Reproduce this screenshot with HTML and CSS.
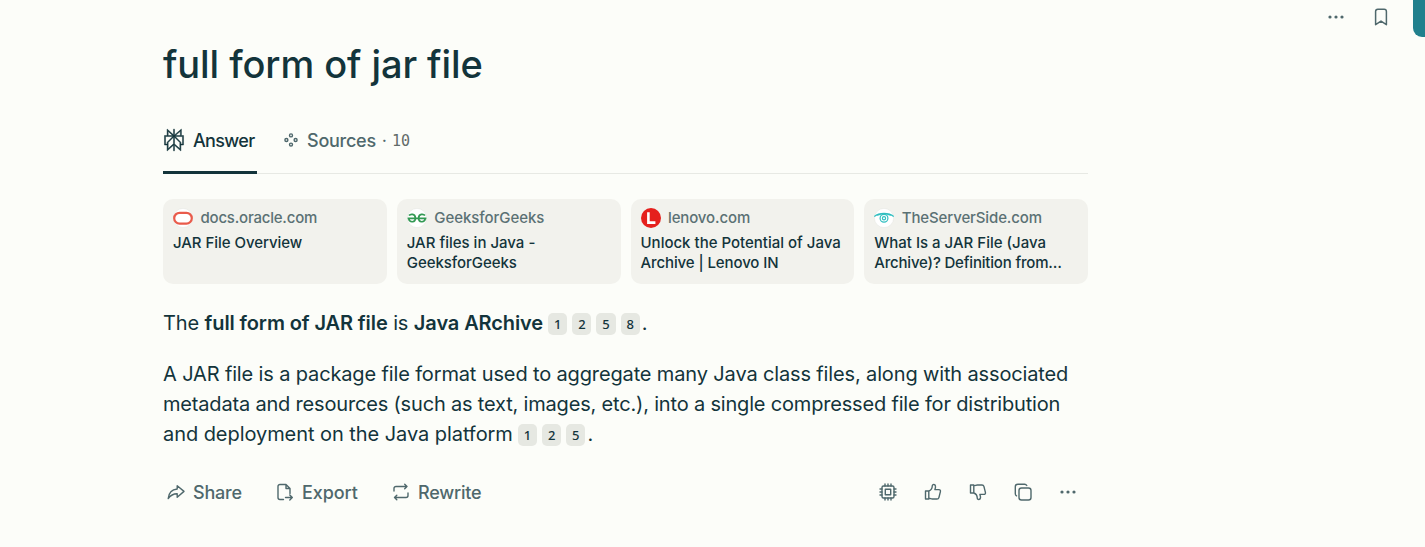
FILE: index.html
```html
<!DOCTYPE html>
<html lang="en">
<head>
<meta charset="utf-8">
<title>full form of jar file</title>
<link rel="stylesheet" href="styles.css">
</head>
<body>
<div class="toolbar">
  <svg class="icon" width="20" height="20" viewBox="0 0 20 20"><g fill="currentColor"><circle cx="4" cy="10" r="1.6"/><circle cx="10" cy="10" r="1.6"/><circle cx="16" cy="10" r="1.6"/></g></svg>
  <svg class="icon bookmark" width="20" height="20" viewBox="0 0 20 20"><path d="M4.600 17.700V4.500a2.200 2.200 0 0 1 2.200-2.200h6.400a2.200 2.200 0 0 1 2.200 2.200v13.200L10 14.100z"/></svg>
  <div class="share-button"></div>
</div>
<main class="thread">
  <h1 class="title"><span class="title-text">full form of jar file</span></h1>
  <nav class="tabs">
    <div class="tab active">
      <svg class="logo" width="22" height="22" viewBox="0 0 24 24"><path d="M22.3977 7.0896h-2.3106V.0676l-7.5094 6.3542V.1577h-1.1554v6.1966L4.4904 0v7.0896H1.6023v10.3976h2.8882V24l6.932-6.3591v6.2005h1.1554v-6.0469l6.9318 6.1807v-6.4879h2.8882V7.0896zm-3.4657-4.531v4.531h-5.355l5.355-4.531zm-13.2862.0676 4.8691 4.4634H5.6458V2.6262zM2.7576 16.332V8.245h7.8476l-6.1149 6.1147v1.9723H2.7576zm2.8882 5.0404v-6.534l5.7764-5.7764v7.0111l-5.7764 5.2993zm12.7086.0248-5.7766-5.1509V9.0618l5.7766 5.7766v6.5588zm2.8882-5.0652h-1.733v-1.9723L13.3948 8.245h7.8478v8.087z"/></svg>
      <span class="tab-answer">Answer</span>
    </div>
    <div class="tab">
      <svg class="icon dots" width="16" height="16" viewBox="0 0 16 16"><circle cx="8" cy="3.400" r="1.500"/><circle cx="3.400" cy="8" r="1.500"/><circle cx="12.600" cy="8" r="1.500"/><circle cx="8" cy="12.600" r="1.500"/></svg>
      <span class="tab-sources">Sources</span><span class="separator">·</span><span class="count">10</span>
    </div>
  </nav>
  <section class="cards">
    <article class="card">
      <div class="site"><svg width="20" height="20" viewBox="0 0 20 20"><circle cx="10" cy="10" r="9.600" fill="#fff" stroke="#e5e6e3" stroke-width=".5"/><rect x="1.200" y="4.800" width="17.600" height="10.800" rx="5.400" fill="#fff" stroke="#e95b4b" stroke-width="2.200"/></svg><span class="domain oracle">docs.oracle.com</span></div>
      <div class="headline h-oracle">JAR File Overview</div>
    </article>
    <article class="card">
      <div class="site"><svg width="20" height="20" viewBox="0 0 20 20"><circle cx="10" cy="10" r="9.600" fill="#fff" stroke="#e5e6e3" stroke-width=".5"/><path d="M.6 10.300h18.800M2 7.600C3.500 5.600 8 5.600 8.400 9.800 8.600 14.800 2.500 15 1.700 10.700M18 7.600c-1.500-2-6-2-6.400 2.200-.2 5 5.900 5.200 6.700.9" fill="none" stroke="#349954" stroke-width="1.700"/></svg><span class="domain geeks">GeeksforGeeks</span></div>
      <div class="headline"><span class="g1">JAR files in Java -</span><br><span class="g2">GeeksforGeeks</span></div>
    </article>
    <article class="card">
      <div class="site"><svg width="20" height="20" viewBox="0 0 20 20"><circle cx="10" cy="10" r="10" fill="#e5201d"/><path d="M7.400 4.200v10.400h7" fill="none" stroke="#fff" stroke-width="2.600"/></svg><span class="domain lenovo">lenovo.com</span></div>
      <div class="headline"><span class="l1">Unlock the Potential of Java</span><br><span class="l2">Archive | Lenovo IN</span></div>
    </article>
    <article class="card">
      <div class="site"><svg width="20" height="20" viewBox="0 0 20 20"><circle cx="10" cy="10" r="9.600" fill="#fff" stroke="#e5e6e3" stroke-width=".5"/><g fill="none" stroke="#32bfc0"><path d="M.3 8.500C5 4.400 15 4.400 19.700 8.500M3.500 7.200Q10 4 16.500 7.200" stroke-width="1.200"/><circle cx="10" cy="10.300" r="3.900" stroke-width="1.200"/><circle cx="10" cy="10.300" r="1.600" stroke-width="1.200"/></g></svg><span class="domain server">TheServerSide.com</span></div>
      <div class="headline"><span class="s1">What Is a JAR File (Java</span><br><span class="s2">Archive)? Definition from…</span></div>
    </article>
  </section>
  <section class="answer">
    <p class="line lead"><span class="a1">The <b>full form of JAR file</b> is <b>Java ARchive</b></span><span class="cites"><span class="cite">1</span><span class="cite">2</span><span class="cite">5</span><span class="cite">8</span></span>.</p>
    <p class="line"><span class="a2">A JAR file is a package file format used to aggregate many Java class files, along with associated</span><br><span class="a3">metadata and resources (such as text, images, etc.), into a single compressed file for distribution</span><br><span class="a4">and deployment on the Java platform</span><span class="cites"><span class="cite">1</span><span class="cite">2</span><span class="cite">5</span></span>.</p>
  </section>
  <footer class="actions">
    <div class="action share"><svg class="icon" width="18" height="18" viewBox="0 0 18 18"><path d="M10.200 6V2.800L17 8.400l-6.800 5.800v-3.400c-3.800-.1-6.400 1.300-9 4.800.5-5.400 3.600-9.100 9-9.600z"/></svg><span>Share</span></div>
    <div class="action export"><svg class="icon" width="18" height="18" viewBox="0 0 18 18"><path d="M7.500 16.500H4a2 2 0 0 1-2-2v-11a2 2 0 0 1 2-2h6l4 4v5M10 1.800v3.700h3.800M9.500 14.500h6.800M13.800 12l2.500 2.500-2.500 2.500"/></svg><span>Export</span></div>
    <div class="action rewrite"><svg class="icon" width="18" height="18" viewBox="0 0 18 18"><path d="M2 8V5.500a2 2 0 0 1 2-2h11M12.700 1.200 15 3.500l-2.300 2.300M16 10v2.500a2 2 0 0 1-2 2H2.500M4.800 12.200l-2.300 2.300 2.300 2.300"/></svg><span>Rewrite</span></div>
    <div class="tools">
      <svg class="icon" width="20" height="20" viewBox="0 0 20 20"><rect x="4" y="4" width="12" height="12" rx="1.500"/><rect x="7.300" y="7.300" width="5.400" height="5.400"/><path d="M7 4V2M10 4V2M13 4V2M7 18v-2M10 18v-2M13 18v-2M4 7H2M4 10H2M4 13H2M18 7h-2M18 10h-2M18 13h-2"/></svg>
      <svg class="icon" width="20" height="20" viewBox="0 0 20 20"><path id="thumb" d="M2.500 9h3.300v8H2.500zM5.800 9c2.400-.8 3.400-2.600 3.500-5.200.1-1.800 3.100-1.800 3.200.6.1 1.300-.3 2.300-.6 3.200h3.900c1.300 0 1.900.9 1.600 2l-1.500 6c-.3 1-.9 1.400-1.900 1.400H9.300c-1.500 0-1.800-.8-3.500-.8"/></svg>
      <svg class="icon" width="20" height="20" viewBox="0 0 20 20"><use href="#thumb" transform="translate(0 20) scale(1 -1)"/></svg>
      <svg class="icon" width="20" height="20" viewBox="0 0 20 20"><rect x="6" y="6" width="12" height="12" rx="2.500"/><path d="M3.500 13.800A2.500 2.500 0 0 1 2.300 11.600V4.800A2.500 2.500 0 0 1 4.800 2.300h6.800a2.500 2.500 0 0 1 2.200 1.200"/></svg>
      <svg class="icon" width="20" height="20" viewBox="0 0 20 20"><g fill="currentColor" stroke="none"><circle cx="4" cy="10" r="1.600"/><circle cx="10" cy="10" r="1.600"/><circle cx="16" cy="10" r="1.600"/></g></svg>
    </div>
  </footer>
</main>
</body>
</html>
```
FILE: styles.css
```css
* { box-sizing: border-box; }
body {
  margin: 0;
  height: 547px;
  overflow: hidden;
  background: #fcfdf9;
  color: #13343b;
  font-family: Inter, "Liberation Sans", sans-serif;
}
.icon { fill: none; stroke: currentColor; stroke-width: 1.4; stroke-linecap: round; stroke-linejoin: round; flex: none; overflow: visible; }
.toolbar { display: flex; justify-content: flex-end; align-items: center; height: 37px; color: #4f686c; }
.toolbar .icon { margin-bottom: 3px; stroke-width: 1.5; }
.toolbar > .icon:first-child { stroke: none; }
.bookmark { margin: 0 22px 0 25px; }
.share-button { width: 12px; height: 37px; border-bottom-left-radius: 9px; background: #21808d; }
.thread { width: 925px; margin-left: 163px; }
.title { margin: 0; height: 70px; padding-top: 3px; font-size: 38px; font-weight: 500; line-height: 48px; letter-spacing: -.08px; white-space: nowrap; }
.tabs { display: flex; height: 67px; border-bottom: 1px solid #e7e9e4; font-size: 18px; font-weight: 500; }
.tab { display: flex; align-items: center; height: 67px; padding-bottom: 1px; color: #4f686c; white-space: nowrap; }
.tab.active { width: 94px; margin-right: 26px; border-bottom: 3px solid #13343b; padding-bottom: 0; color: #13343b; }
.logo { flex: none; margin-right: 8px; margin-top: 2px; fill: currentColor; stroke: currentColor; stroke-width: .5; overflow: visible; }
.tab-answer { margin-top: 2px; letter-spacing: -.65px; }
.tab-sources { letter-spacing: -.25px; }
.dots { margin-right: 8px; }
.separator { margin-left: 6px; font-weight: 400; }
.count { margin-left: 5px; padding-top: 1px; font-family: "DejaVu Sans Mono", monospace; font-size: 15px; font-weight: 400; color: #626b69; }
.cards { display: grid; grid-template-columns: repeat(4, 1fr); gap: 10px; margin-top: 25px; }
.card { height: 85px; padding: 9px 10px; border-radius: 10px; background: #f2f2ed; font-size: 15px; font-weight: 500; white-space: nowrap; }
.site { display: flex; align-items: center; gap: 7.5px; height: 20px; color: #5b7174; }
.domain { margin-top: -1px; }
.oracle { letter-spacing: -.21px; }
.geeks { letter-spacing: -.05px; }
.lenovo { letter-spacing: -.13px; }
.server { letter-spacing: -.12px; }
.headline { margin-top: 5px; line-height: 20px; }
.h-oracle { letter-spacing: -.05px; }
.g2 { letter-spacing: -.05px; }
.l2 { letter-spacing: -.1px; }
.s2 { letter-spacing: -.18px; }
.answer { margin-top: 24px; font-size: 20px; font-weight: 400; line-height: 30px; white-space: nowrap; }
.line { margin: 0; }
.lead { margin-bottom: 21px; }
.line b { font-weight: 600; }
.a1 { letter-spacing: -.105px; }
.a2 { letter-spacing: -.14px; }
.a3 { letter-spacing: -.18px; }
.a4 { letter-spacing: -.06px; }
.cites { display: inline-flex; gap: 5px; margin: 0 2px 0 5px; vertical-align: 1px; }
.cite { width: 19.2px; height: 22px; border-radius: 5px; background: #e6e8e2; font: 500 13px/22px "Noto Sans", sans-serif; text-align: center; }
.actions { display: flex; align-items: center; height: 40px; margin-top: 23px; padding-left: 4px; color: #4f686c; font-size: 18px; font-weight: 500; letter-spacing: -.2px; }
.action { display: flex; align-items: center; gap: 8px; }
.share { width: 109px; }
.export { width: 116px; letter-spacing: -.1px; }
.tools { display: flex; gap: 25px; margin-left: auto; margin-right: 10px; }
```
